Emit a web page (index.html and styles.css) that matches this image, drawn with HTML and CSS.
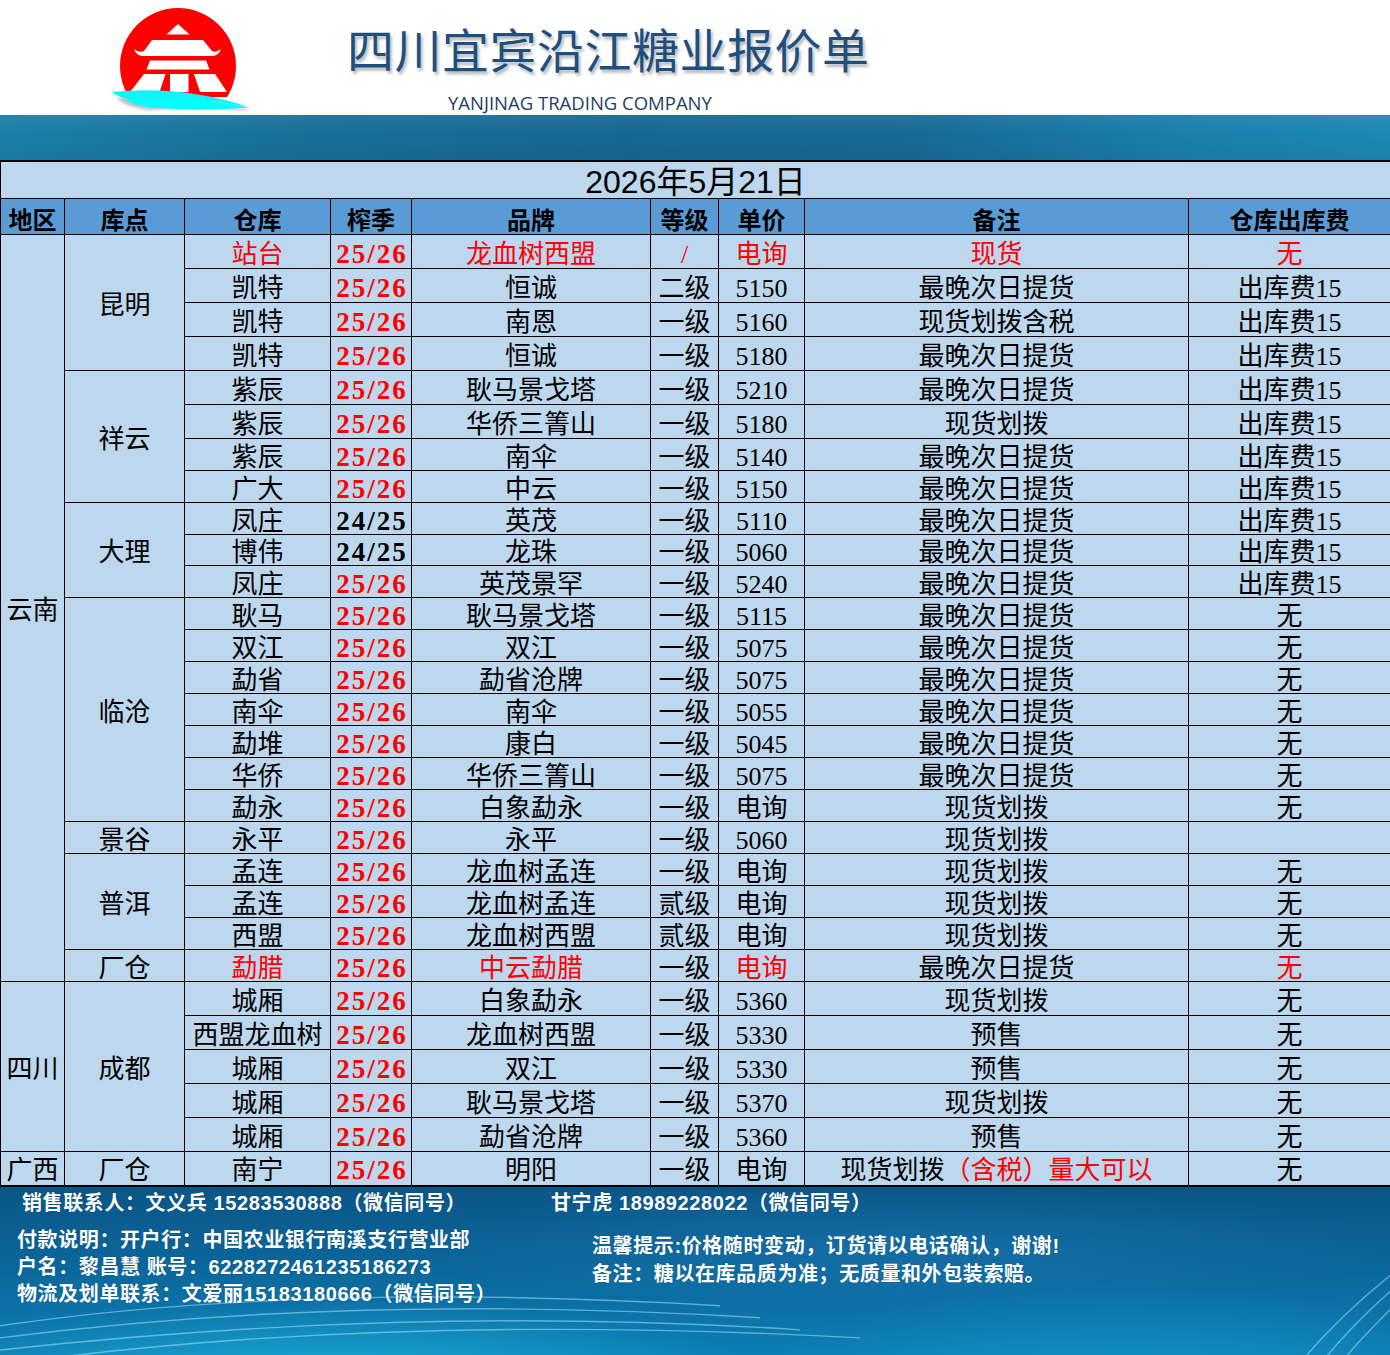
FILE: index.html
```html
<!DOCTYPE html>
<html lang="zh-CN">
<head>
<meta charset="utf-8">
<title>四川宜宾沿江糖业报价单</title>
<link rel="stylesheet" href="styles.css">
</head>
<body>
<header class="top">
  <svg class="logo" viewBox="108 0 144 115" width="144" height="115" aria-hidden="true">
    <defs>
      <clipPath id="cut"><rect x="100" y="0" width="160" height="97"/></clipPath>
      <filter id="sh" x="-20%" y="-50%" width="140%" height="200%"><feGaussianBlur stdDeviation="1.6"/></filter>
    </defs>
    <circle cx="178" cy="66" r="58" fill="#ff0000" clip-path="url(#cut)"/>
    <polygon points="178,24 189.5,34.5 166.5,34.5" fill="#fff"/>
    <path d="M152,40 L203,40 L212,51 Q216,53 221,49 Q219,55 213,56 L142,56 Q136,55 134,49 Q139,53 144,51 Z" fill="#fff"/>
    <polygon points="150,60.5 206,60.5 209.5,69.5 146.5,69.5" fill="#fff"/>
    <polygon points="144,74 165.5,74 159.5,92 130,92" fill="#fff"/>
    <rect x="170" y="74" width="18.5" height="18" fill="#fff"/>
    <polygon points="194,74 215,74 227,92 200,92" fill="#fff"/>
    <path d="M116,98 Q185,91 252,111 Q200,106 150,110 Q128,108 116,98 Z" fill="#7d8a8e" opacity="0.55" filter="url(#sh)"/>
    <path d="M112,92 Q182,85 249,107 Q196,96 146,102 Q122,100 112,92 Z" fill="#12f4f4"/>
    <path d="M126,100 Q190,95 249,107.5 Q200,111 156,108 Q136,106 126,100 Z" fill="#00ffff"/>
  </svg>
  <div class="brand">
    <h1 class="title">四川宜宾沿江糖业报价单</h1>
    <p class="sub">YANJINAG TRADING COMPANY</p>
  </div>
</header>
<div class="band"></div>
<table class="sheet">
  <colgroup>
    <col class="c1"><col class="c2"><col class="c3"><col class="c4"><col class="c5"><col class="c6"><col class="c7"><col class="c8"><col class="c9">
  </colgroup>
  <tbody>
  <tr class="date-row"><td colspan="9" class="date">2026年5月21日</td></tr>
  <tr class="head"><th>地区</th><th>库点</th><th>仓库</th><th>榨季</th><th>品牌</th><th>等级</th><th>单价</th><th>备注</th><th>仓库出库费</th></tr>

  <tr class="ha"><td rowspan="23">云南</td><td rowspan="4">昆明</td><td class="red">站台</td><td class="season">25/26</td><td class="red">龙血树西盟</td><td class="red">/</td><td class="red">电询</td><td class="red">现货</td><td class="red">无</td></tr>
  <tr class="ha"><td>凯特</td><td class="season">25/26</td><td>恒诚</td><td>二级</td><td>5150</td><td>最晚次日提货</td><td>出库费15</td></tr>
  <tr class="ha"><td>凯特</td><td class="season">25/26</td><td>南恩</td><td>一级</td><td>5160</td><td>现货划拨含税</td><td>出库费15</td></tr>
  <tr class="ha"><td>凯特</td><td class="season">25/26</td><td>恒诚</td><td>一级</td><td>5180</td><td>最晚次日提货</td><td>出库费15</td></tr>

  <tr class="ha"><td rowspan="4">祥云</td><td>紫辰</td><td class="season">25/26</td><td>耿马景戈塔</td><td>一级</td><td>5210</td><td>最晚次日提货</td><td>出库费15</td></tr>
  <tr class="ha"><td>紫辰</td><td class="season">25/26</td><td>华侨三箐山</td><td>一级</td><td>5180</td><td>现货划拨</td><td>出库费15</td></tr>
  <tr class="hc"><td>紫辰</td><td class="season">25/26</td><td>南伞</td><td>一级</td><td>5140</td><td>最晚次日提货</td><td>出库费15</td></tr>
  <tr class="hc"><td>广大</td><td class="season">25/26</td><td>中云</td><td>一级</td><td>5150</td><td>最晚次日提货</td><td>出库费15</td></tr>

  <tr class="hc"><td rowspan="3">大理</td><td>凤庄</td><td class="season old">24/25</td><td>英茂</td><td>一级</td><td>5110</td><td>最晚次日提货</td><td>出库费15</td></tr>
  <tr class="hd"><td>博伟</td><td class="season old">24/25</td><td>龙珠</td><td>一级</td><td>5060</td><td>最晚次日提货</td><td>出库费15</td></tr>
  <tr class="hc"><td>凤庄</td><td class="season">25/26</td><td>英茂景罕</td><td>一级</td><td>5240</td><td>最晚次日提货</td><td>出库费15</td></tr>

  <tr class="hc"><td rowspan="7">临沧</td><td>耿马</td><td class="season">25/26</td><td>耿马景戈塔</td><td>一级</td><td>5115</td><td>最晚次日提货</td><td>无</td></tr>
  <tr class="hc"><td>双江</td><td class="season">25/26</td><td>双江</td><td>一级</td><td>5075</td><td>最晚次日提货</td><td>无</td></tr>
  <tr class="hc"><td>勐省</td><td class="season">25/26</td><td>勐省沧牌</td><td>一级</td><td>5075</td><td>最晚次日提货</td><td>无</td></tr>
  <tr class="hc"><td>南伞</td><td class="season">25/26</td><td>南伞</td><td>一级</td><td>5055</td><td>最晚次日提货</td><td>无</td></tr>
  <tr class="hc"><td>勐堆</td><td class="season">25/26</td><td>康白</td><td>一级</td><td>5045</td><td>最晚次日提货</td><td>无</td></tr>
  <tr class="hc"><td>华侨</td><td class="season">25/26</td><td>华侨三箐山</td><td>一级</td><td>5075</td><td>最晚次日提货</td><td>无</td></tr>
  <tr class="hc"><td>勐永</td><td class="season">25/26</td><td>白象勐永</td><td>一级</td><td>电询</td><td>现货划拨</td><td>无</td></tr>

  <tr class="hc"><td>景谷</td><td>永平</td><td class="season">25/26</td><td>永平</td><td>一级</td><td>5060</td><td>现货划拨</td><td></td></tr>

  <tr class="hc"><td rowspan="3">普洱</td><td>孟连</td><td class="season">25/26</td><td>龙血树孟连</td><td>一级</td><td>电询</td><td>现货划拨</td><td>无</td></tr>
  <tr class="hc"><td>孟连</td><td class="season">25/26</td><td>龙血树孟连</td><td>贰级</td><td>电询</td><td>现货划拨</td><td>无</td></tr>
  <tr class="hc"><td>西盟</td><td class="season">25/26</td><td>龙血树西盟</td><td>贰级</td><td>电询</td><td>现货划拨</td><td>无</td></tr>

  <tr class="hc"><td>厂仓</td><td class="red">勐腊</td><td class="season">25/26</td><td class="red">中云勐腊</td><td>一级</td><td class="red">电询</td><td>最晚次日提货</td><td class="red">无</td></tr>

  <tr class="ha"><td rowspan="5">四川</td><td rowspan="5">成都</td><td>城厢</td><td class="season">25/26</td><td>白象勐永</td><td>一级</td><td>5360</td><td>现货划拨</td><td>无</td></tr>
  <tr class="ha"><td>西盟龙血树</td><td class="season">25/26</td><td>龙血树西盟</td><td>一级</td><td>5330</td><td>预售</td><td>无</td></tr>
  <tr class="ha"><td>城厢</td><td class="season">25/26</td><td>双江</td><td>一级</td><td>5330</td><td>预售</td><td>无</td></tr>
  <tr class="ha"><td>城厢</td><td class="season">25/26</td><td>耿马景戈塔</td><td>一级</td><td>5370</td><td>现货划拨</td><td>无</td></tr>
  <tr class="ha"><td>城厢</td><td class="season">25/26</td><td>勐省沧牌</td><td>一级</td><td>5360</td><td>预售</td><td>无</td></tr>

  <tr class="ha last"><td>广西</td><td>厂仓</td><td>南宁</td><td class="season">25/26</td><td>明阳</td><td>一级</td><td>电询</td><td>现货划拨<span class="red">（含税）量大可以</span></td><td>无</td></tr>
  </tbody>
</table>
<footer class="foot">
  <svg class="waves" viewBox="0 0 1390 169" preserveAspectRatio="none" aria-hidden="true">
    <path d="M0,138 C180,112 420,100 720,118" />
    <path d="M0,150 C220,122 470,112 760,130" />
    <path d="M0,162 C260,134 520,124 800,142" />
    <path d="M60,169 C300,140 560,134 860,150" />
    <path d="M1390,88 C1360,112 1330,140 1305,169" />
    <path d="M1390,104 C1365,126 1342,150 1326,169" />
    <path d="M1390,122 C1372,140 1356,156 1346,169" />
  </svg>
  <div class="foot-grid">
    <p class="l1">销售联系人：文义兵 15283530888（微信同号）</p>
    <p class="r1">甘宁虎 18989228022（微信同号）</p>
    <div class="l2">
      <p>付款说明：开户行：中国农业银行南溪支行营业部</p>
      <p>户名：黎昌慧 账号：6228272461235186273</p>
      <p>物流及划单联系：文爱丽15183180666（微信同号）</p>
    </div>
    <div class="r2">
      <p>温馨提示:价格随时变动，订货请以电话确认，谢谢!</p>
      <p>备注：糖以在库品质为准；无质量和外包装索赔。</p>
    </div>
  </div>
</footer>
</body>
</html>
```
FILE: styles.css
```css
* { box-sizing: border-box; }
html, body { margin: 0; padding: 0; }
body {
  width: 1390px;
  background: #ffffff;
  font-family: "Liberation Serif", "Noto Sans CJK SC", serif;
  color: #000;
}

/* ---------- header ---------- */
.top {
  height: 115px;
  display: flex;
  align-items: flex-start;
  padding-left: 108px;
  background: #fff;
}
.logo { display: block; flex: none; }
.brand { margin-left: 95px; }
.title {
  margin: 20px 0 0;
  font-family: "Noto Sans CJK SC", sans-serif;
  font-weight: 400;
  font-size: 47px;
  line-height: 56px;
  letter-spacing: 0.5px;
  color: #1f4f7d;
  text-shadow: 2px 3px 3px rgba(40, 50, 60, 0.35);
  white-space: nowrap;
}
.sub {
  margin: 17px 0 0 101px;
  font-family: "Open Sans", sans-serif;
  font-size: 18.5px;
  line-height: 20px;
  color: #1f3f62;
  white-space: nowrap;
}

.band {
  height: 45px;
  background:
    linear-gradient(180deg, rgba(255,255,255,0.06) 0%, rgba(0,0,0,0) 40%, rgba(0,0,0,0.05) 100%),
    linear-gradient(90deg, #1b80a9 0%, #187099 22%, #166894 45%, #176a96 65%, #1a80ad 85%, #1c89b6 100%);
}

/* ---------- table ---------- */
.sheet {
  width: 1390px;
  border-collapse: collapse;
  table-layout: fixed;
}
.c1 { width: 64px; }
.c2 { width: 120px; }
.c3 { width: 146px; }
.c4 { width: 81px; }
.c5 { width: 239px; }
.c6 { width: 68px; }
.c7 { width: 86px; }
.c8 { width: 384px; }
.c9 { width: 202px; }

.sheet td, .sheet th {
  border: 1px solid #000;
  padding: 5px 0 0;
  text-align: center;
  vertical-align: middle;
  font-size: 26px;
  line-height: 25px;
  font-weight: 400;
  white-space: nowrap;
  overflow: hidden;
  background: #bdd7ee;
}
.date-row { height: 36px; }
.sheet td.date {
  border-top: 2px solid #000;
  font-family: "Liberation Sans", "Noto Sans CJK SC", sans-serif;
  font-size: 32px;
  line-height: 32px;
  padding-top: 4px;
  overflow: visible;
}
.head { height: 36px; }
.sheet th {
  background: #5b9bd5;
  font-family: "Noto Sans CJK SC", sans-serif;
  font-weight: 700;
  font-size: 24px;
  line-height: 26px;
  padding-top: 4px;
}
.ha { height: 34px; }
.hc { height: 32px; }
.hd { height: 30px; }
.last td { border-bottom: 2px solid #000; }

.red { color: #ff0000; }
.sheet td.season {
  color: #ff0000;
  font-weight: 700;
  font-size: 27px;
  letter-spacing: 2px;
  text-indent: 2px;
}
.sheet td.season.old { color: #000; }

/* ---------- footer ---------- */
.foot {
  position: relative;
  height: 170px;
  overflow: hidden;
  color: #fff;
  background:
    radial-gradient(ellipse 620px 110px at 330px 190px, rgba(40, 205, 240, 0.55), rgba(40, 205, 240, 0) 70%),
    radial-gradient(ellipse 520px 150px at 1120px 200px, rgba(30, 170, 220, 0.45), rgba(30, 170, 220, 0) 70%),
    radial-gradient(ellipse 700px 90px at 900px 60px, rgba(40, 130, 190, 0.35), rgba(40, 130, 190, 0) 70%),
    linear-gradient(180deg, #0a5687 0%, #0b669a 45%, #0c7fb4 100%);
}
.waves {
  position: absolute;
  left: 0;
  top: 0;
  width: 1390px;
  height: 170px;
}
.waves path {
  fill: none;
  stroke: rgba(175, 235, 255, 0.5);
  stroke-width: 1.4;
}
.foot-grid {
  position: relative;
  display: grid;
  grid-template-columns: 551px 1fr;
  padding-top: 3px;
  font-family: "Liberation Sans", "Noto Sans CJK SC", sans-serif;
  font-weight: 700;
  font-size: 20px;
  letter-spacing: 0.6px;
  text-shadow: 0 0 1px rgba(0, 40, 80, 0.5);
}
.foot-grid p { margin: 0; white-space: nowrap; }
.l1, .r1 { line-height: 26px; }
.l1 { padding-left: 22px; }
.l2 { padding-left: 17px; margin-top: 11px; }
.l2 p { line-height: 27px; }
.r2 { padding-left: 41px; margin-top: 16px; }
.r2 p { line-height: 28px; }
```
